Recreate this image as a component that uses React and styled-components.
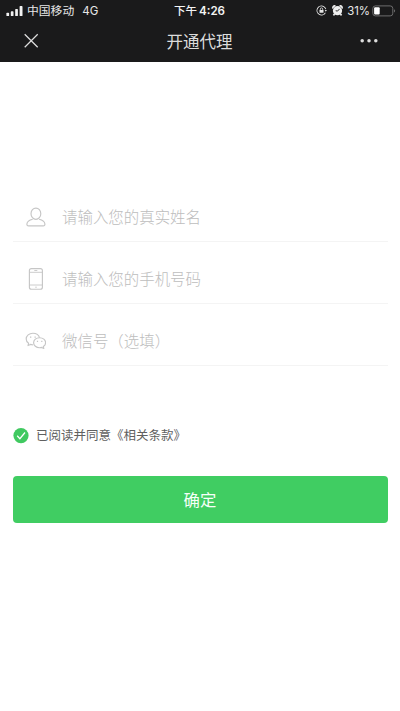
import React from 'react';
import styled, { createGlobalStyle } from 'styled-components';

const GlobalStyle = createGlobalStyle`
  * { box-sizing: border-box; }
  body {
    margin: 0;
    background: #fff;
    font-family: "Liberation Sans", "Noto Sans CJK SC", sans-serif;
  }
`;

const Page = styled.div`
  display: flex;
  flex-direction: column;
  height: 711px;
  overflow: hidden;
  background: #fff;
`;

const Header = styled.header`
  height: 62px;
  background: #1a1a1b;
  color: #e8e8e8;
`;

const StatusBar = styled.div`
  display: grid;
  grid-template-columns: 1fr auto 1fr;
  align-items: center;
  height: 20px;
  padding: 0 4px 0 6px;
  font-family: Inter, "Noto Sans CJK SC", sans-serif;
  font-size: 11.8px;
  line-height: 20px;
  white-space: nowrap;
`;

const StatusLeft = styled.div`
  display: flex;
  align-items: center;
`;

const Carrier = styled.span`
  margin-left: 4px;
  padding-top: 1px;
`;

const Network = styled.span`
  margin-left: 8px;
  padding-top: 1px;
  font-size: 11.5px;
`;

const Clock = styled.span`
  display: flex;
  gap: 2px;
  padding: 1px 3px 0 0;
  font-weight: 500;
  font-size: 11.5px;
  color: #f4f4f4;
`;

const Digits = styled.span`
  font-weight: 600;
  font-size: 11.6px;
`;

const StatusRight = styled.div`
  display: flex;
  align-items: center;
  justify-content: flex-end;
`;

const Percent = styled.span`
  margin: 0 2px 0 4px;
  padding-top: 1px;
  font-size: 11.4px;
`;

const NavBar = styled.div`
  display: grid;
  grid-template-columns: 1fr auto 1fr;
  align-items: center;
  height: 42px;
  padding: 0 21px 0 23px;
`;

const NavButton = styled.button`
  display: flex;
  justify-self: ${({ $end }) => ($end ? 'end' : 'start')};
  padding: 0;
  border: 0;
  background: none;
  color: #dedede;
`;

const Title = styled.h1`
  margin: 0;
  padding: 2px 3px 0 0;
  font-size: 16.5px;
  font-weight: 400;
  line-height: 24px;
  color: #dcdcdc;
`;

const Form = styled.form`
  display: flex;
  flex-direction: column;
  padding: 118px 12.5px 0;
`;

const Field = styled.label`
  display: flex;
  align-items: center;
  height: 62px;
  padding: 13px 0 0 11.5px;
  border-bottom: 1px solid #f4f4f4;
  color: #c6c6c6;
`;

const Input = styled.input`
  flex: 1;
  min-width: 0;
  height: 30px;
  margin-left: 16px;
  padding: 0 0 2px;
  border: 0;
  outline: 0;
  background: transparent;
  color: #555;
  font-family: "Noto Sans CJK SC", sans-serif;
  font-size: 15.45px;
  font-weight: 300;
  &::placeholder { color: #bdbdbd; opacity: 1; }
`;

const Agreement = styled.div`
  display: flex;
  align-items: center;
  gap: 7.5px;
  height: 20px;
  margin-top: 60px;
  font-size: 12.5px;
  line-height: 20px;
  color: #606060;
`;

const Submit = styled.button`
  height: 47px;
  margin-top: 30px;
  padding: 0 0 1px;
  border: 0;
  border-radius: 4px;
  background: #40cd62;
  color: #f6fff8;
  font-family: "Noto Sans CJK SC", sans-serif;
  font-size: 16.4px;
`;

const SignalIcon = () => (
  <svg width="17" height="12" viewBox="0 0 17 12" fill="#f2f2f2">
    <rect x="0.4" y="7.8" width="2.7" height="3.3" rx="0.7" />
    <rect x="4.8" y="6.2" width="2.7" height="4.9" rx="0.7" />
    <rect x="9.2" y="4" width="2.7" height="7.1" rx="0.7" />
    <rect x="13.6" y="1" width="2.9" height="10.1" rx="0.7" />
  </svg>
);

const RotationLockIcon = () => (
  <svg width="11" height="11" viewBox="0 0 11 11" fill="none" stroke="#e6e6e6">
    <circle cx="5.5" cy="5.5" r="4.5" strokeWidth=".9" strokeDasharray="24 4.3" transform="rotate(30 5.5 5.5)" />
    <path d="M4.3 5.2V4.1a1.2 1.2 0 0 1 2.4 0v1.1" strokeWidth=".8" />
    <rect x="3.5" y="5" width="4" height="2.8" rx=".4" fill="#e6e6e6" stroke="none" />
    <path d="M8.7 5.1h2.2L9.8 6.8z" fill="#e6e6e6" stroke="none" />
  </svg>
);

const AlarmSvg = styled.svg`
  display: block;
  margin-left: 5px;
`;

const AlarmIcon = () => (
  <AlarmSvg width="11" height="11" viewBox="0 0 11 11">
    <circle cx="5.5" cy="5.7" r="4.6" fill="#eee" />
    <path d="M1 3.4A2 2 0 0 1 3.4.9M7.6.9A2 2 0 0 1 10 3.4M2.6 9 1.4 10.3M8.4 9l1.2 1.3" stroke="#eee" strokeWidth="1.7" fill="none" />
    <path d="M7.6 3.9 5.5 6.1 3.7 5.7" stroke="#1a1a1b" strokeWidth=".9" fill="none" />
  </AlarmSvg>
);

const BatteryIcon = () => (
  <svg width="24" height="12" viewBox="0 0 24 12">
    <rect x=".8" y=".9" width="20" height="10" rx="2.6" fill="none" stroke="#777" strokeWidth=".9" />
    <rect x="2.1" y="2.3" width="5.6" height="7.2" rx="1" fill="#fff" />
    <path d="M22.1 4.3c1.4.5 1.4 2.7 0 3.2z" fill="#777" />
  </svg>
);

const CloseIcon = () => (
  <svg width="16" height="16" viewBox="0 0 16 16" stroke="currentColor" strokeWidth="1.25">
    <path d="m1.7 1.2 13 13M14.7 1.2l-13 13" />
  </svg>
);

const MoreIcon = () => (
  <svg width="19" height="6" viewBox="0 0 19 6" fill="currentColor">
    <circle cx="2.2" cy="2.8" r="1.75" />
    <circle cx="9" cy="2.8" r="1.75" />
    <circle cx="15.8" cy="2.8" r="1.75" />
  </svg>
);

const FieldIcon = styled.svg.attrs({
  width: 22,
  height: 24,
  viewBox: '0 0 22 24',
  fill: 'none',
  stroke: 'currentColor',
  strokeWidth: 1.15,
  strokeLinejoin: 'round',
})`
  flex: none;
`;

const PersonIcon = () => (
  <FieldIcon>
    <ellipse cx="11.9" cy="8.7" rx="4.9" ry="5.6" />
    <path d="M8.7 14.2c-3.4.8-5.6 2.4-5.8 4.8-.1 1.2.5 1.8 1.6 1.8h14.8c1.1 0 1.7-.6 1.6-1.8-.2-2.4-2.4-4-5.8-4.8" />
  </FieldIcon>
);

const PhoneIcon = () => (
  <FieldIcon>
    <rect x="5.4" y="1.6" width="13" height="20.6" rx="2" />
    <path d="M5.4 5.3h13M5.4 18h13M10.3 3.5h3M11.2 20.2h1.6" strokeWidth=".9" />
  </FieldIcon>
);

const WechatIcon = () => (
  <FieldIcon strokeWidth="1">
    <path d="M8.9 15.8c-.9 0-1.7-.1-2.5-.4L4 16.6l.6-2.3c-1.6-1.1-2.4-2.6-2.4-4.4 0-3.2 2.9-5.7 6.7-5.7 3.2 0 5.9 1.8 6.6 4.4" />
    <path d="M15.6 8.7c-3.4 0-6 2.2-6 5s2.6 5 6 5c.8 0 1.5-.1 2.1-.3l2.1 1.1-.5-1.9c1.5-.9 2.3-2.3 2.3-3.9 0-2.8-2.6-5-6-5z" />
    <path d="M6 8.2h1.3M10.5 8.2h1.3M12.9 12.3h1.2M17.2 12.3h1.2" strokeWidth="1.3" />
  </FieldIcon>
);

const CheckIcon = () => (
  <svg width="16" height="16" viewBox="0 0 16 16" fill="none">
    <circle cx="8" cy="7.6" r="7.6" fill="#40c960" />
    <path d="m4.2 7.8 2.7 2.9 5.1-6.2" stroke="#fff" strokeWidth="1.25" />
  </svg>
);

const fields = [
  { name: 'realName', Icon: PersonIcon, placeholder: '请输入您的真实姓名' },
  { name: 'phone', Icon: PhoneIcon, placeholder: '请输入您的手机号码' },
  { name: 'wechat', Icon: WechatIcon, placeholder: '微信号（选填）' },
];

export default function App() {
  return (
    <Page>
      <GlobalStyle />
      <Header>
        <StatusBar>
          <StatusLeft>
            <SignalIcon />
            <Carrier>中国移动</Carrier>
            <Network>4G</Network>
          </StatusLeft>
          <Clock>下午<Digits>4:26</Digits></Clock>
          <StatusRight>
            <RotationLockIcon />
            <AlarmIcon />
            <Percent>31%</Percent>
            <BatteryIcon />
          </StatusRight>
        </StatusBar>
        <NavBar>
          <NavButton type="button" aria-label="关闭"><CloseIcon /></NavButton>
          <Title>开通代理</Title>
          <NavButton type="button" aria-label="更多" $end><MoreIcon /></NavButton>
        </NavBar>
      </Header>
      <Form>
        {fields.map(({ name, Icon, placeholder }) => (
          <Field key={name}>
            <Icon />
            <Input name={name} placeholder={placeholder} />
          </Field>
        ))}
        <Agreement>
          <CheckIcon />
          <span>已阅读并同意《相关条款》</span>
        </Agreement>
        <Submit type="button">确定</Submit>
      </Form>
    </Page>
  );
}
